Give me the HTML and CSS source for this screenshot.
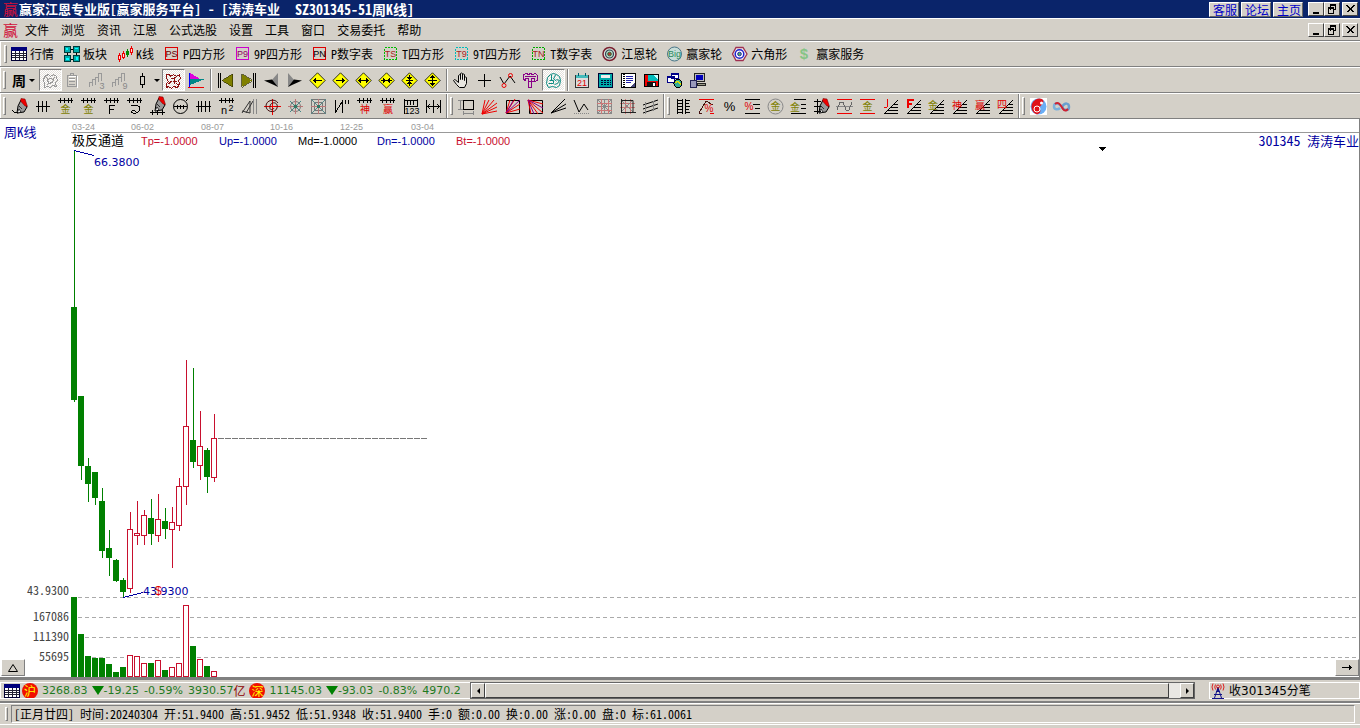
FILE: index.html
```html
<!DOCTYPE html>
<html lang="zh-CN">
<head>
<meta charset="utf-8">
<title>赢家江恩专业版</title>
<link rel="stylesheet" href="styles.css">
</head>
<body>
<svg class="defs" aria-hidden="true">
  <defs>
    <g id="comb"><path d="M1 2.500h15M3.500 0v5M7.500 0v5M11.500 0v5M14.500 0v5"/></g>
    <g id="diamond"><path d="M8.500 .8l7.700 7.700-7.700 7.700L.8 8.500z" fill="#ff0" stroke="#000" stroke-width=".8" shape-rendering="auto"/></g>
    <g id="fan"><path d="M2 15.500h14M3 15L16 2M6 12.500h10M9 9.500h7M12 6.500h4"/></g>
    <g id="pen" shape-rendering="auto"><path d="M10 2l6 7-3 5-7 1 1-7z" fill="#999" stroke="#000"/><path d="M10 .5l4 .5 2.500 7.500-2.500-.5-4.500-5z" fill="#e00" stroke="#600" stroke-width=".5"/><path d="M8 8l3 3M6 15l2-4 2 3z" fill="#fff" stroke="#000" stroke-width=".7"/></g>
    <g id="table"><path d="M.5 1.500h15v13H.5z" fill="#fff" stroke="#003"/><path d="M0 1h16v4H0z" fill="#00007b"/><path d="M1 7.500h14M1 9.500h14M1 11.500h14M4.500 5v9M8.500 5v9M12.500 5v9" stroke="#223"/></g>
    <g id="win-min"><path d="M3 9h6v2H3z"/></g>
    <g id="win-restore"><path d="M4.500 2v5M4 2.500h6M4 1.500h6M9.500 2v5M8 6.500h2M2.500 5v5M2 5.500h6M2 4.500h6M7.500 5v5M2 10.500h6" fill="none" stroke="#000"/></g>
    <g id="win-close"><path d="M2.500 2.500l7 7M3.500 2.500l7 7M10.500 2.500l-7 7M9.500 2.500l-7 7" fill="none" stroke="#000"/></g>
  </defs>
</svg>

<header class="titlebar">
  <span class="logo">赢</span>
  <h1><span>赢家江恩专业版[赢家服务平台]</span><span>-</span><span>[涛涛车业</span><span class="code">SZ301345-51周K线]</span></h1>
  <nav class="links"><a href="#">客服</a><a href="#">论坛</a><a href="#">主页</a></nav>
  <div class="winbtns">
    <button aria-label="最小化"><svg viewBox="0 0 12 12"><use href="#win-min"/></svg></button><button aria-label="还原"><svg viewBox="0 0 12 12"><use href="#win-restore"/></svg></button><button aria-label="关闭" class="close"><svg viewBox="0 0 12 12"><use href="#win-close"/></svg></button>
  </div>
</header>

<div class="menubar">
  <span class="logo">赢</span>
  <nav class="menus">
    <button>文件</button><button>浏览</button><button>资讯</button><button>江恩</button><button>公式选股</button><button>设置</button><button>工具</button><button>窗口</button><button>交易委托</button><button>帮助</button>
  </nav>
  <div class="winbtns">
    <button aria-label="最小化窗口"><svg viewBox="0 0 12 12"><use href="#win-min"/></svg></button><button aria-label="还原窗口"><svg viewBox="0 0 12 12"><use href="#win-restore"/></svg></button><button aria-label="关闭窗口" class="close"><svg viewBox="0 0 12 12"><use href="#win-close"/></svg></button>
  </div>
</div>

<div class="toolbar labelled">
  <div class="group last">
    <button><svg viewBox="0 0 16 16"><use href="#table"/></svg>行情</button>
    <button><svg viewBox="0 0 16 16"><path d="M3 4v9h9V3z" fill="none" stroke="#000"/><path d="M.5.5h6v6h-6zM9.500.5h6v6h-6zM.5 9.500h6v6h-6zM9.500 9.500h6v6h-6z" fill="#0aa" stroke="#003a3a"/><path d="M2 2h2v2H2zM11 2h3v1h-3zM2 12h3v2H2zM12 11h2v3h-2z" fill="#0ff"/></svg>板块</button>
    <button><svg viewBox="0 0 16 16"><path d="M2.500 7v9M6.500 5v8M14.500 0v9" stroke="#e00"/><path d="M10.500 3v8" stroke="#080"/><path d="M1.500 9.500h2v4h-2zM5.500 7.500h2v4h-2zM13.500 2.500h2v4h-2z" fill="#fdd" stroke="#e00"/><path d="M9.500 5.500h2v3h-2z" fill="#080" stroke="#080"/></svg>K线</button>
    <button><svg viewBox="0 0 16 16"><path d="M1.500 1.500h12v12h-12z" fill="none" stroke="#d00"/><text x="7.500" y="11" class="tag" fill="#600">PS</text></svg>P四方形</button>
    <button><svg viewBox="0 0 16 16"><path d="M1.500 1.500h12v12h-12z" fill="none" stroke="#c0c"/><text x="7.500" y="11" class="tag" fill="#900060">P9</text></svg>9P四方形</button>
    <button><svg viewBox="0 0 16 16"><path d="M1.500 1.500h12v12h-12z" fill="none" stroke="#d00"/><text x="7.500" y="11" class="tag" fill="#000">PN</text></svg>P数字表</button>
    <button><svg viewBox="0 0 16 16"><path d="M1.500 1.500h12v12h-12z" fill="none" stroke="#0b0" stroke-dasharray="2 1"/><text x="7.500" y="11" class="tag" fill="#a22">TS</text></svg>T四方形</button>
    <button><svg viewBox="0 0 16 16"><path d="M1.500 1.500h12v12h-12z" fill="none" stroke="#0bb" stroke-dasharray="2 1"/><text x="7.500" y="11" class="tag" fill="#a22">T9</text></svg>9T四方形</button>
    <button><svg viewBox="0 0 16 16"><path d="M1.500 1.500h12v12h-12z" fill="none" stroke="#0a0" stroke-dasharray="2 1"/><text x="7.500" y="11" class="tag" fill="#a22">TN</text></svg>T数字表</button>
    <button><svg viewBox="0 0 16 16" class="smooth"><circle cx="7.500" cy="8" r="6.500" fill="#d8e4dc" stroke="#7b2030" stroke-width="1.500"/><circle cx="7.500" cy="8" r="4" fill="#b9d8c8" stroke="#345" stroke-width="1.200"/><circle cx="7.500" cy="8" r="1.800" fill="#b33" stroke="#363"/></svg>江恩轮</button>
    <button><svg viewBox="0 0 16 16" class="smooth"><circle cx="7.500" cy="8" r="7" fill="#c8ddd8" stroke="#4b7688"/><text x="7.500" y="11" class="tag" fill="#2a8a5a">Big</text></svg>赢家轮</button>
    <button><svg viewBox="0 0 16 16" class="smooth"><path d="M4 1.500h7l4 6.500-4 6.500H4L.5 8z" fill="#eee" stroke="#a03050" stroke-width="1.300"/><circle cx="7.500" cy="8" r="4.300" fill="#fff" stroke="#22c" stroke-width="1.500"/><circle cx="7.500" cy="8" r="1.800" fill="#5b5" stroke="#22a"/></svg>六角形</button>
    <button><svg viewBox="0 0 16 16" class="smooth"><text x="7" y="13" class="dollar">$</text></svg>赢家服务</button>
  </div>
</div>

<div class="toolbar">
  <div class="group last">
    <button class="drop" aria-label="周期"><span class="period">周</span><i></i></button>
    <button class="on" aria-label="叠加"><svg viewBox="0 0 17 17"><path d="M2.500 4.500l4-2 2 2 3-2 3 2 1 4-2 2 1 4-4-1-2 2-3-1-3 1v-4l-1-3zM5.500 7.500l3-1 3 1-1 3-4 1zM4 5l2 2M13 5l-2 2M5 13l2-2" fill="none" stroke="#999"/></svg></button>
    <button aria-label="粘贴"><svg viewBox="0 0 17 17"><path d="M3.500 4.500h9v11M4 7.500h6" stroke="#fff" fill="none"/><g stroke="#999" fill="none"><path d="M2.500 3.500h9v11h-9zM5.500 1.500h3v2h-3zM4 6.500h6M4 9.500h6M4 12.500h6"/></g></svg></button>
    <button aria-label="三均线"><svg viewBox="0 0 17 17"><path d="M1.500 15v-5M1 10.500h3M4.500 7v7M4 7.500h3M7.500 5v8M7 5.500h3M10.500 1v9M10 1.500h3M13.500 1v8" stroke="#999"/><text x="14" y="17" class="tag" fill="#888">3</text></svg></button>
    <button aria-label="九均线"><svg viewBox="0 0 17 17"><path d="M1.500 15v-5M1 10.500h3M4.500 7v7M4 7.500h3M7.500 5v8M7 5.500h3M10.500 1v9M10 1.500h3M13.500 1v8" stroke="#999"/><text x="14" y="17" class="tag" fill="#888">9</text></svg></button>
    <button class="drop" aria-label="K线样式"><svg viewBox="0 0 17 17"><path d="M6.500 4.500h4v8h-4zM8.500 1v3M8.500 13v3" fill="none" stroke="#000"/></svg><i></i></button>
    <button class="on" aria-label="主图"><svg viewBox="0 0 17 17"><path d="M1.500 2.500h3l1 2 3-2 3 2 3-2 1 4-2 2 1 3-2 4-4-1-2 2-3-2-2 1v-4l2-2-2-3zM6.500 6.500l5-1M9.500 6v6M7.500 9.500h4M11.500 11.500l2 2M3.500 12l3-3" fill="none" stroke="#8b1010"/></svg></button>
    <button aria-label="旗形"><svg viewBox="0 0 17 17"><path d="M1.500 1v15" stroke="#00f"/><path d="M2 1l12 7H2z" fill="#d0d"/><path d="M2 7h15L2 13z" fill="#088"/><path d="M0 15.500h16" stroke="#e00"/></svg></button>
    <span class="sep"></span>
    <button aria-label="首条"><svg viewBox="0 0 17 17"><path d="M1.500 1v15M3.500 1v15" stroke="#000"/><path d="M15.500 2v13L5 8.500z" fill="#808000" stroke="#330" stroke-width=".7"/></svg></button>
    <button aria-label="末条"><svg viewBox="0 0 17 17"><path d="M15.500 1v15M13.500 1v15" stroke="#000"/><path d="M1.500 2v13L12 8.500z" fill="#808000" stroke="#330" stroke-width=".7"/></svg></button>
    <button aria-label="向前"><svg viewBox="0 0 17 17" class="smooth"><path d="M15 1v14L8 9z" fill="#888"/><path d="M1 8.500l8-1 6 7.500-4-2z" fill="#000"/></svg></button>
    <button aria-label="向后"><svg viewBox="0 0 17 17" class="smooth"><path d="M2 1v14l7-6z" fill="#888"/><path d="M16 8.500l-8-1L2 15l4-2z" fill="#000"/></svg></button>
    <button aria-label="左移"><svg viewBox="0 0 17 17"><use href="#diamond"/><path d="M4 8.500h9M6.500 6v5M5.500 7v3" stroke="#000"/></svg></button>
    <button aria-label="右移"><svg viewBox="0 0 17 17"><use href="#diamond"/><path d="M4 8.500h9M10.500 6v5M11.500 7v3" stroke="#000"/></svg></button>
    <button aria-label="横向放大"><svg viewBox="0 0 17 17"><use href="#diamond"/><path d="M3 8.500h11M5.500 6v5M11.500 6v5M4.500 7v3M12.500 7v3" stroke="#000"/></svg></button>
    <button aria-label="横向缩小"><svg viewBox="0 0 17 17"><use href="#diamond"/><path d="M3 8.500h11M5.500 6v5M11.500 6v5M6.500 7v3M10.500 7v3" stroke="#000" fill="none"/></svg></button>
    <button aria-label="纵向缩小"><svg viewBox="0 0 17 17"><use href="#diamond"/><path d="M8.500 3v11M6 5.500h5M7 6.500h3M6 11.500h5M7 10.500h3M5 8.500h7" stroke="#000" fill="none"/></svg></button>
    <button aria-label="纵向放大"><svg viewBox="0 0 17 17"><use href="#diamond"/><path d="M8.500 3v11M6 5.500h5M7 4.500h3M6 11.500h5M7 12.500h3M4 8.500h9" stroke="#000" fill="none"/></svg></button>
    <span class="sep"></span>
    <button aria-label="手形"><svg viewBox="0 0 17 17" class="smooth"><path d="M5.500 10.500v-7q1-1.500 2 0v4-6q1-1 2 0v6-5q1-1 2 0v6-3q1-1 2 0v6l-2 4h-5l-3-3-3-4q1-1.500 2-.5z" fill="#e8e6e0" stroke="#000"/></svg></button>
    <button aria-label="十字"><svg viewBox="0 0 17 17"><path d="M8.500 2v13M2 8.500h13" stroke="#000"/></svg></button>
    <button aria-label="折线"><svg viewBox="0 0 17 17" class="smooth"><path d="M1 5l4 7 6-8 5 7" fill="none" stroke="#000"/><circle cx="5" cy="13.500" r="2" fill="none" stroke="#e00"/><circle cx="11.500" cy="3.500" r="2" fill="none" stroke="#e00"/></svg></button>
    <button aria-label="区间"><svg viewBox="0 0 17 17"><path d="M1.500 2.500l3-1 2 1 2-1 2 1 3-1 2 2v5l-3 1v-3H9.500v9h-3v-9h-3v2l-2-1zM3 4.500h11M6.500 9.500h5" fill="none" stroke="#808"/></svg></button>
    <button class="on" aria-label="江恩脑"><svg viewBox="0 0 17 17" class="smooth"><path d="M2.500 5.500l3-3 3-1 3 1 3 2 1 4-1 5-3 2-4-1-4 1-2-4zM6.500 3v5M10.500 3l-2 4 3 2M4.500 8.500h4v3h-5M11.500 7.500l3 1-2 3-3 1" fill="none" stroke="#0a8a80"/></svg></button>
    <span class="sep"></span>
    <button aria-label="日历"><svg viewBox="0 0 17 17"><path d="M1.500 3.500h13v12h-13z" fill="#ddd" stroke="#333"/><path d="M2 3h12v3H2z" fill="#4bb"/><path d="M4.500 1v3M11.500 1v3" stroke="#056"/><text x="8" y="14" class="tag" fill="#d00">21</text></svg></button>
    <button aria-label="计算器"><svg viewBox="0 0 17 17"><path d="M1.500 1.500h14v14h-14z" fill="#0aa" stroke="#003"/><path d="M4 3h9v3H4z" fill="#eee"/><path d="M4 8.500h10M4 10.500h10M4 12.500h10" stroke="#003" stroke-dasharray="2 1"/></svg></button>
    <button aria-label="笔记"><svg viewBox="0 0 17 17"><path d="M1.500 1.500h14v14h-14z" fill="#fff" stroke="#000"/><path d="M3.500 2v13" stroke="#000" stroke-width="2" stroke-dasharray="1 1"/><path d="M6 4.500h7M6 6.500h7M6 8.500h7M6 10.500h5" stroke="#22a"/><path d="M10 15l5-5v5z" fill="#447"/></svg></button>
    <button aria-label="保存"><svg viewBox="0 0 17 17"><path d="M1.500 2.500h14v12h-14z" fill="#e00" stroke="#000"/><path d="M5 3h10v6H5z" fill="#0bb"/><path d="M10 3h5v5z" fill="#cff"/><path d="M4 10h9v4H4z" fill="#111"/><path d="M10 11h2v3h-2z" fill="#fff"/></svg></button>
    <button aria-label="网络窗口"><svg viewBox="0 0 17 17"><path d="M5.500 1.500h7v5h-7zM1.500 4.500h7v6h-7z" fill="#fff" stroke="#008"/><path d="M2 5h6M6 2h6" stroke="#008" stroke-width="2"/><circle cx="12" cy="11.500" r="4" fill="#3a9" stroke="#000"/><path d="M9 11l3-2 3 4" fill="none" stroke="#dd0"/></svg></button>
    <button aria-label="电脑"><svg viewBox="0 0 17 17"><path d="M5.500 1.500h10v8h-10z" fill="#bbb" stroke="#222"/><path d="M7 3h7v5H7z" fill="#00b"/><path d="M1.500 8.500h6v7h-6z" fill="#99b" stroke="#225"/><path d="M8 11.500h8v2H8z" fill="#998" stroke="#222"/></svg></button>
  </div>
</div>

<div class="toolbar">
  <div class="group">
    <button aria-label="画笔"><svg viewBox="0 0 17 17"><use href="#pen"/><path d="M1 12l3 3 3-1" fill="none" stroke="#000"/></svg></button>
    <button aria-label="刻度"><svg viewBox="0 0 17 17"><path d="M2 8.500h14M4.500 3v11M8.500 3v11M12.500 3v11" stroke="#000"/></svg></button>
    <button aria-label="金刻度一"><svg viewBox="0 0 17 17"><use href="#comb" stroke="#000"/><text x="8.500" y="15" class="glyph gold">金</text></svg></button>
    <button aria-label="金刻度二"><svg viewBox="0 0 17 17"><use href="#comb" stroke="#000"/><text x="8.500" y="15" class="glyph gold">金</text></svg></button>
    <button aria-label="F刻度"><svg viewBox="0 0 17 17"><use href="#comb" stroke="#000"/><path d="M6.500 7v9M6 7.500h6M6 11.500h5" stroke="#000"/></svg></button>
    <button aria-label="螺旋刻度"><svg viewBox="0 0 17 17"><use href="#comb" stroke="#000"/><path d="M5 8c7-2 11 1 8 5s-9 2-7 0 4 0 3 1" fill="none" stroke="#000"/></svg></button>
    <button aria-label="画笔刻度"><svg viewBox="0 0 17 17"><use href="#pen" y="-2"/><path d="M1 14.500h15M3.500 12v5M8.500 12v5M13.500 12v5" stroke="#000"/></svg></button>
    <button aria-label="圆刻度"><svg viewBox="0 0 17 17" class="smooth"><circle cx="8.500" cy="8.500" r="7" fill="none" stroke="#000"/><path d="M2 8.500h13M5.500 7v4M8.500 7v4M11.500 7v4M14 3l2-2" stroke="#000"/></svg></button>
    <button aria-label="等分线"><svg viewBox="0 0 17 17"><path d="M1 8.500h15M3.500 3v11M6.500 3v11M10.500 3v11M14.500 3v11" stroke="#000"/></svg></button>
    <button aria-label="平方"><svg viewBox="0 0 17 17"><use href="#comb" stroke="#000"/><text x="6" y="16" class="sym">n</text><text x="13" y="13" class="tag">2</text></svg></button>
    <button aria-label="角线"><svg viewBox="0 0 17 17" class="smooth"><path d="M1 15L9 3v12l-8-2M5 15l7-12" stroke="#333" fill="none"/><path d="M12.500 1v15M15.500 1v15" stroke="#888"/></svg></button>
    <button aria-label="螺旋"><svg viewBox="0 0 17 17" class="smooth"><path d="M8.500 1v16M0 8.500h17" stroke="#e00"/><path d="M14 5C11 0 2 2 2 8s9 8 11 2-6-7-7-2 3 4 4 2" fill="none" stroke="#411"/></svg></button>
    <button aria-label="放射"><svg viewBox="0 0 17 17" class="smooth"><path d="M3 3l11 11M14 3L3 14" stroke="#488"/><circle cx="8.500" cy="8.500" r="5" fill="none" stroke="#777"/><path d="M8.500 1v15M1 8.500h15" stroke="#b77"/><circle cx="8.500" cy="8.500" r="2" fill="#376"/></svg></button>
    <button aria-label="四方"><svg viewBox="0 0 17 17" class="smooth"><path d="M1.500 1.500h14v14h-14zM4.500 4.500h8v8h-8z" fill="none" stroke="#777"/><path d="M1 1l15 15M16 1L1 16" stroke="#588"/><path d="M8.500 1v15M1 8.500h15" stroke="#b77"/><path d="M7 7h3v3H7z" fill="#376"/></svg></button>
    <button aria-label="波段"><svg viewBox="0 0 17 17"><path d="M2.500 2v13M2 15l7-11v11M12.500 2v4M15.500 2v4" fill="none" stroke="#000"/></svg></button>
    <button aria-label="神刻度"><svg viewBox="0 0 17 17"><use href="#comb" stroke="#000"/><text x="9" y="15" class="glyph red">神</text></svg></button>
    <button aria-label="赢刻度"><svg viewBox="0 0 17 17"><use href="#comb" stroke="#000"/><text x="9" y="15" class="glyph red">赢</text></svg></button>
    <button aria-label="数字刻度"><svg viewBox="0 0 17 17"><path d="M2.500 1v15M2 2.500h14M2 8.500h14M15.500 1v8M5.500 3v4M8.500 3v4M11.500 3v4" stroke="#000"/><text x="10" y="16" class="tag">123</text></svg></button>
    <button aria-label="宽度"><svg viewBox="0 0 17 17"><path d="M1.500 2v13M8.500 2v13M15.500 2v13M2 8.500h13M5 6l-2 2.500L5 11M12 6l2 2.500-2 2.500" fill="none" stroke="#000"/></svg></button>
  </div>
  <div class="group">
    <button aria-label="方框"><svg viewBox="0 0 17 17"><path d="M5.500 2.500h10v9h-10z" fill="none" stroke="#000"/><path d="M2.500 2v10M0 2.500h5M0 11.500h5M5.500 13v4M15.500 13v4M5 15.500h10" stroke="#888"/></svg></button>
    <button aria-label="上升扇形"><svg viewBox="0 0 17 17" class="smooth"><path d="M1 16L4 2M1 16L8 2M1 16L13 2M1 16L16 5M1 16l15-7M1 16l15-3" stroke="#e00"/></svg></button>
    <button aria-label="方框扇形"><svg viewBox="0 0 17 17" class="smooth"><path d="M2.500 2.500h13v13h-13z" fill="none" stroke="#000"/><path d="M2 15L6 2M2 15L11 1M2 15L16 6M2 15l14-4" stroke="#e00"/><path d="M2 15L9 3M2 15L16 2" stroke="#808"/></svg></button>
    <button aria-label="下降扇形"><svg viewBox="0 0 17 17" class="smooth"><path d="M2.500 2.500h13v13h-13z" fill="none" stroke="#000"/><path d="M1 2l15 4M1 2l15 13M1 2l10 14M1 2l3 14" stroke="#e00"/><path d="M1 2l15 8M1 2l6 14" stroke="#808"/></svg></button>
    <button aria-label="射线"><svg viewBox="0 0 17 17" class="smooth"><path d="M1 15L15 1M1 15l15-9M1 15l15-5" stroke="#000"/></svg></button>
    <button aria-label="V形"><svg viewBox="0 0 17 17" class="smooth"><path d="M1 2l5 12 5-8 4 6" fill="none" stroke="#000"/><path d="M1 15.500h15" stroke="#888" stroke-dasharray="1 1"/></svg></button>
    <button aria-label="网格"><svg viewBox="0 0 17 17" class="smooth"><path d="M1.500 1.500h14v14h-14zM1 8.500h15M8.500 1v15M1 1l15 15M16 1L1 16" fill="none" stroke="#888"/><path d="M1 5.500h15M1 12.500h15M5.500 1v15M12.500 1v15" stroke="#c77"/></svg></button>
    <button aria-label="坐标网格"><svg viewBox="0 0 17 17" class="smooth"><path d="M1 5.500h15M1 9.500h15M6.500 1v15M11.500 1v15" stroke="#c77"/><path d="M2 2l12 12M14 2L2 14" stroke="#888"/><path d="M2.500 1v14M2 2.500h12v12M2 14.500h15" fill="none" stroke="#222"/></svg></button>
    <button aria-label="平行线"><svg viewBox="0 0 17 17" class="smooth"><path d="M1 7l15-5M1 11l15-5M1 15l15-5" stroke="#000"/><path d="M3.500 4v12M11.500 3v10" stroke="#888"/></svg></button>
  </div>
  <div class="group">
    <button aria-label="标尺"><svg viewBox="0 0 17 17"><path d="M2.500 1v15M7.500 1v15M10.500 1v15M2 2.500h5M2 5.500h5M2 8.500h5M2 11.500h5M2 14.500h5M10 2.500h5M10 5.500h4M10 8.500h5M10 11.500h4M10 14.500h5" stroke="#000"/></svg></button>
    <button aria-label="百分比一"><svg viewBox="0 0 17 17"><path d="M1 1.500h15M12 15.500h4" stroke="#e00"/><path d="M1 15L8 3l7 4M1 15.500h3" fill="none" stroke="#411"/><text x="11" y="14" class="pct red">%</text></svg></button>
    <button aria-label="百分比"><svg viewBox="0 0 17 17"><text x="8.500" y="13" class="sym big">%</text></svg></button>
    <button aria-label="百分比线"><svg viewBox="0 0 17 17"><path d="M1 1.500h15M9 6.500h7M11 10.500h5M1 15.500h15" stroke="#000"/><text x="5" y="12" class="pct red">%</text></svg></button>
    <button aria-label="金圆"><svg viewBox="0 0 17 17" class="smooth"><circle cx="8.500" cy="8.500" r="7.500" fill="none" stroke="#888"/><text x="8.500" y="12" class="glyph gold">金</text></svg></button>
    <button aria-label="金线"><svg viewBox="0 0 17 17"><path d="M4 1.500h12M11 6.500h5M11 10.500h5M1 15.500h15" stroke="#000"/><text x="5" y="13" class="glyph gold">金</text></svg></button>
    <button aria-label="画笔标尺"><svg viewBox="0 0 17 17"><use href="#pen"/><path d="M4.500 1v15M1 3.500h7M1 8.500h7M1 13.500h7" stroke="#000"/></svg></button>
    <button aria-label="波动"><svg viewBox="0 0 17 17"><path d="M1 1.500h15M1 15.500h15" stroke="#e00"/><path d="M0 8.500h17" stroke="#888"/><path d="M1 12l3-8 3 0 3 8h3l3-8" fill="none" stroke="#666"/></svg></button>
    <button aria-label="金区间"><svg viewBox="0 0 17 17"><path d="M1 1.500h15M1 15.500h15" stroke="#e00"/><text x="8.500" y="12" class="glyph gold">金</text></svg></button>
    <button aria-label="J线"><svg viewBox="0 0 17 17"><use href="#fan" stroke="#000"/><path d="M5.500 1v8M2 9.500h3" stroke="#e00"/></svg></button>
    <button aria-label="F线"><svg viewBox="0 0 17 17"><use href="#fan" stroke="#000"/><path d="M3 1v9M2 2h7M2 6h5" stroke="#e00" stroke-width="2"/></svg></button>
    <button aria-label="金角线"><svg viewBox="0 0 17 17"><use href="#fan" stroke="#000"/><text x="5" y="11" class="glyph gold">金</text></svg></button>
    <button aria-label="神角线"><svg viewBox="0 0 17 17"><use href="#fan" stroke="#000"/><text x="6" y="11" class="glyph red">神</text></svg></button>
    <button aria-label="赢角线"><svg viewBox="0 0 17 17"><use href="#fan" stroke="#000"/><text x="6" y="11" class="glyph red">赢</text></svg></button>
    <button aria-label="四角线"><svg viewBox="0 0 17 17"><use href="#fan" stroke="#000"/><text x="5" y="10" class="glyph red">四</text></svg></button>
  </div>
  <div class="group last">
    <button aria-label="太极"><svg viewBox="0 0 17 17" class="smooth"><path d="M0 0h17v17H0z" fill="#fff"/><circle cx="8.500" cy="8.500" r="8" fill="#6aaef5"/><path d="M12 1A8 8 0 1 0 7 16.500c3-1 4-3 3-5s0-3 2-5 2-4 0-5.500z" fill="#e01018"/><circle cx="7" cy="11" r="3" fill="none" stroke="#fff"/><circle cx="11.500" cy="5" r="1.500" fill="#fff"/></svg></button>
    <button aria-label="无穷"><svg viewBox="0 0 17 17" class="smooth"><path d="M9 9c3-5 7-4 7 0s-5 4-7 0" fill="none" stroke="#6a9fd0" stroke-width="2.500"/><path d="M8 8C5 4 1 5 1 8.500S5 12 7 10" fill="none" stroke="#7ab0dd" stroke-width="2.500"/><path d="M2 6c4-3 6 2 8 5s4 1 5 0" fill="none" stroke="#d02030" stroke-width="2"/></svg></button>
  </div>
</div>

<main class="chart">
  <svg class="plot" role="img" aria-label="周K线图">
    <g transform="translate(0 -119)">
      <g class="dates"><text x="72" y="130">03-24</text><text x="131" y="130">06-02</text><text x="201" y="130">08-07</text><text x="270" y="130">10-16</text><text x="340" y="130">12-25</text><text x="411" y="130">03-04</text></g>
      <line x1="71" x2="100%" y1="132.500" y2="132.500" stroke="#999"/>
      <text x="4" y="137" class="cn blue">周K线</text>
      <text x="72" y="145" class="cn">极反通道</text>
      <g class="ind"><text x="141" y="145" fill="#c8102e">Tp=-1.0000</text><text x="219" y="145" fill="#0000a0">Up=-1.0000</text><text x="298" y="145">Md=-1.0000</text><text x="377" y="145" fill="#0000a0">Dn=-1.0000</text><text x="456" y="145" fill="#c8102e">Bt=-1.0000</text></g>
      <path d="M1099 147h7l-3.500 4z"/>
      <g stroke="#aaa" stroke-dasharray="4 3"><line x1="71" x2="100%" y1="597.500" y2="597.500"/><line x1="71" x2="100%" y1="617.500" y2="617.500"/><line x1="71" x2="100%" y1="637.500" y2="637.500"/><line x1="71" x2="100%" y1="657.500" y2="657.500"/></g>
      <line x1="218" x2="427" y1="438.500" y2="438.500" stroke="#777" stroke-dasharray="6 1"/>
      <g id="candles"></g>
      <path d="M74 150.500l20 5M123 597.500l20-5" stroke="#0000a0" fill="none"/>
      <text x="94" y="166" class="price">66.3800</text>
      <text x="143" y="595" class="price">43.9300</text>
      <text x="155" y="595" class="mark">$</text>
      <g class="axis"><text x="69" y="595">43.9300</text><text x="69" y="621">167086</text><text x="69" y="641">111390</text><text x="69" y="661">55695</text></g>
    </g>
  </svg>
  <div class="stock"><span>301345</span> 涛涛车业</div>
  <button class="corner left" aria-label="展开"><svg viewBox="0 0 12 10" class="smooth"><path d="M1.500 8.500h9L6 1.500z" fill="none" stroke="#000"/></svg></button>
  <button class="corner right" aria-label="右移"><svg viewBox="0 0 12 10"><path d="M1 4.500h10M8.500 2v5M9.500 3v3" stroke="#000"/></svg></button>
</main>

<div class="quotes">
  <div class="ticker">
    <svg viewBox="0 0 16 16"><use href="#table"/></svg>
    <span class="badge">沪</span>
    <span class="num">3268.83</span><i class="down"></i><span class="num gap">-19.25</span><span class="num gap">-0.59%</span><span class="num">3930.57</span><span class="unit">亿</span>
    <span class="badge">深</span>
    <span class="num">11145.03</span><i class="down"></i><span class="num gap">-93.03</span><span class="num gap">-0.83%</span><span class="num">4970.2</span>
  </div>
  <div class="scroll">
    <button aria-label="向左滚动"><i class="la"></i></button>
    <div class="thumb"></div>
    <button aria-label="向右滚动"><i class="ra"></i></button>
  </div>
  <div class="feed">
    <svg viewBox="0 0 16 16" class="smooth"><path d="M6.500 6l-3 9M7.500 6l3 9M3 11.500h8M1 15.500h12M5 8.500h4" fill="none" stroke="#118"/><path d="M7 4v4" stroke="#118" stroke-width="2"/><path d="M4.500 1.500q-1.500 2.500 0 5M2 .5q-2 3.500 0 7M9.500 1.500q1.500 2.500 0 5M12 .5q2 3.500 0 7" fill="none" stroke="#d22"/><circle cx="7" cy="3.500" r="1.500" fill="none" stroke="#d22"/></svg>
    <span>收301345分笔</span>
  </div>
</div>

<footer class="status">
  <div class="panel">[正月廿四] 时间:20240304 开:51.9400 高:51.9452 低:51.9348 收:51.9400 手:0 额:0.00 换:0.00 涨:0.00 盘:0 标:61.0061</div>
</footer>
<script src="chart.js"></script>
</body>
</html>
```
FILE: styles.css
```css
*, *::before { box-sizing: border-box; }
body {
  margin: 0;
  min-height: 100vh;
  display: flex;
  flex-direction: column;
  background: #d4d0c8;
  color: #000;
  font: 12px/16px "Noto Sans Mono CJK SC", "Noto Sans CJK SC", monospace;
  overflow-x: hidden;
}
button { font: inherit; color: inherit; background: none; border: 0; padding: 0; margin: 0; }
svg { display: block; shape-rendering: crispEdges; flex: none; overflow: visible; }
.smooth { shape-rendering: auto; }
.defs { position: absolute; width: 0; height: 0; }

.titlebar { display: flex; align-items: center; height: 18px; padding: 0 2px 0 3px; background: #0a246a; color: #fff; }
.logo { width: 16px; font-size: 15px; line-height: 18px; color: #d0103a; }
h1 { flex: 1; display: flex; gap: 7px; margin: 0; font-size: 13px; line-height: 18px; font-weight: 700; white-space: nowrap; }
.code { margin-left: 8px; font-size: 14px; }
.links { display: flex; gap: 2px; margin-right: 5px; }
.links a { width: 30px; height: 15px; line-height: 14px; padding-left: 3px; background: #d4d0c8; color: #0000c8; font-size: 12px; text-decoration: none; border: 1px solid; border-color: #fff #666 #666 #fff; white-space: nowrap; }
.winbtns { display: flex; }
.winbtns button { width: 16px; height: 14px; background: #d4d0c8; border: 1px solid; border-color: #fff #404040 #404040 #fff; display: flex; align-items: center; justify-content: center; }
.winbtns svg { width: 12px; height: 12px; }
.winbtns .close { margin-left: 2px; }

.menubar { display: flex; align-items: center; height: 23px; padding: 1px 2px 0 3px; border-top: 1px solid #fff; border-bottom: 1px solid #808080; }
.menus { flex: 1; display: flex; gap: 12px; padding-left: 6px; }

.toolbar { display: flex; height: 26px; border-top: 1px solid #fff; border-bottom: 1px solid #808080; }
.group { display: flex; align-items: center; padding: 0 1px 0 3px; border-right: 1px solid #808080; box-shadow: inset 1px 0 #fff; }
.group::before { content: ""; width: 3px; height: 18px; margin-right: 2px; border: 1px solid; border-color: #fff #808080 #808080 #fff; }
.group.last { border-right: 0; }
.toolbar button { width: 23px; height: 22px; display: flex; align-items: center; justify-content: center; }
.toolbar svg { width: 17px; height: 17px; }
.toolbar .on { border: 1px solid; border-color: #808080 #fff #fff #808080; background: repeating-conic-gradient(#fff 0 25%, #e4e1dc 0 50%) 0 0 / 2px 2px; }
.toolbar .drop { width: 31px; gap: 3px; }
.drop i { border: 3px solid transparent; border-top-color: #000; border-bottom: 0; }
.period { font-size: 14px; font-weight: 700; }
.sep { width: 2px; height: 22px; margin: 0 2px; border-left: 1px solid #808080; border-right: 1px solid #fff; }
.labelled .group { padding-left: 4px; }
.labelled .group::before { margin-right: 0; }
.labelled button { width: auto; padding: 0 6px 0 4px; gap: 3px; white-space: nowrap; }
.labelled svg { width: 16px; height: 16px; }

.tag { font: 9px "Liberation Sans", sans-serif; text-anchor: middle; }
.sym { font: 11px "Liberation Sans", sans-serif; text-anchor: middle; }
.big { font-size: 13px; }
.pct { font: 10px "Liberation Sans", sans-serif; text-anchor: middle; }
.glyph { font: 10px "Noto Sans CJK SC", sans-serif; text-anchor: middle; }
.gold { fill: #808000; }
.red { fill: #e00000; }
.dollar { font: bold 15px "Liberation Sans", sans-serif; text-anchor: middle; fill: #86c486; }

.chart { position: relative; flex: 1; min-height: 558px; background: #fff; border-right: 1px solid #808080; }
.plot { width: 100%; height: 558px; overflow: hidden; }
.dates { font: 9px "Liberation Sans", sans-serif; fill: #999; }
.cn { font-size: 13px; }
.blue { fill: #0000a0; }
.ind { font: 11px "Liberation Sans", sans-serif; }
.price { font: 11px "DejaVu Sans", sans-serif; fill: #0000a0; }
.mark { font: 12px "Liberation Sans", sans-serif; fill: #e00000; }
.axis { font-size: 12px; text-anchor: end; fill: #444; }
.stock { position: absolute; top: 12px; right: 0; font-size: 13px; line-height: 18px; color: #0000a0; }
.stock span { font-size: 14px; }
.corner { position: absolute; bottom: 1px; width: 24px; height: 17px; background: #d4d0c8; border: 1px solid; border-color: #fff #808080 #808080 #fff; display: flex; align-items: center; justify-content: center; }
.corner svg { width: 12px; height: 10px; }
.left { left: 1px; }
.right { right: 0; }

.quotes { display: flex; height: 26px; padding: 2px 0; border-top: 3px solid #808080; border-bottom: 2px solid #808080; }
.ticker { display: flex; align-items: center; width: 470px; padding-left: 4px; border-top: 1px solid #fff; border-bottom: 1px solid #fff; box-shadow: inset 1px 0 #fff; overflow: hidden; white-space: nowrap; }
.ticker svg, .feed svg { width: 16px; height: 16px; }
.badge { width: 16px; height: 16px; margin: 0 4px 0 2px; border-radius: 8px; background: #f01000; color: #ff0; text-align: center; flex: none; }
.unit + .badge { margin-left: 4px; }
.num { font: 11px/16px "DejaVu Sans", sans-serif; color: #1e7a1e; }
.gap { margin-right: 5px; }
.down { margin: 0 0 0 4px; border: 6px solid transparent; border-top: 9px solid #008000; border-bottom: 0; }
.unit { color: #8b0000; }
.scroll { flex: 1; display: flex; height: 17px; margin-right: 14px; border: 1px solid #666; background: #e9e7e3; }
.scroll button, .thumb { background: #d4d0c8; border: 1px solid; border-color: #fff #404040 #404040 #fff; }
.scroll button { width: 14px; display: flex; align-items: center; justify-content: center; }
.thumb { flex: 1; margin-right: 11px; }
.la, .ra { border: 3px solid transparent; }
.la { border-right-color: #000; border-left: 0; }
.ra { border-left-color: #000; border-right: 0; }
.feed { display: flex; align-items: center; gap: 2px; width: 151px; padding-left: 1px; border: 1px solid #fff; font: 12px/16px "DejaVu Sans", "Noto Sans CJK SC", sans-serif; }

.status { margin-bottom: 3px; height: 22px; padding: 1px 5px 0 5px; display: flex; gap: 3px; border-top: 1px solid #fff; border-bottom: 1px solid #fff; white-space: nowrap; }
.status::before { content: ""; width: 3px; height: 14px; margin-top: 2px; border: 1px solid; border-color: #fff #808080 #808080 #fff; }
.panel { flex: 1; height: 18px; padding-left: 2px; line-height: 15px; border: 1px solid; border-color: #808080 #fff #fff #808080; }
```
FILE: chart.js
```js
// [body top, body bottom, high, low, rising, volume top]
const weeks = [
  [307, 400, 151, 402, 0, 597], [396, 466, 396, 480, 0, 634], [466, 484, 458, 502, 0, 656],
  [472, 498, 472, 505, 0, 658], [501, 551, 488, 558, 0, 658], [548, 558, 530, 576, 0, 664],
  [560, 581, 559, 582, 0, 672], [580, 592, 578, 598, 0, 667], [529, 589, 512, 593, 1, 655],
  [533, 536, 501, 545, 1, 656], [515, 536, 510, 545, 1, 663], [518, 534, 499, 545, 0, 663],
  [519, 536, 494, 542, 1, 660], [521, 529, 508, 539, 0, 670], [522, 530, 507, 568, 1, 667],
  [486, 526, 478, 531, 1, 663], [426, 487, 360, 505, 1, 605], [440, 462, 368, 468, 0, 646],
  [446, 466, 411, 480, 1, 659], [450, 477, 448, 493, 0, 666], [438, 478, 414, 482, 1, 671]
];
const FLOOR = 677;
const layer = document.getElementById('candles');

function add(d, color, fill) {
  const p = document.createElementNS('http://www.w3.org/2000/svg', 'path');
  p.setAttribute('d', d);
  p.setAttribute('stroke', color);
  p.setAttribute('fill', fill);
  layer.appendChild(p);
}

weeks.forEach(([top, bottom, high, low, rising, vol], i) => {
  const x = 71.5 + i * 7;
  const color = rising ? '#c8102e' : '#008000';
  const fill = rising ? '#fff' : color;
  add(`M${x + 3} ${high}V${low}`, color, 'none');
  add(`M${x} ${top + 0.5}h5V${bottom - 0.5}h-5z`, color, fill);
  add(`M${x} ${vol + 0.5}h5V${FLOOR - 0.5}h-5z`, color, fill);
});
```
